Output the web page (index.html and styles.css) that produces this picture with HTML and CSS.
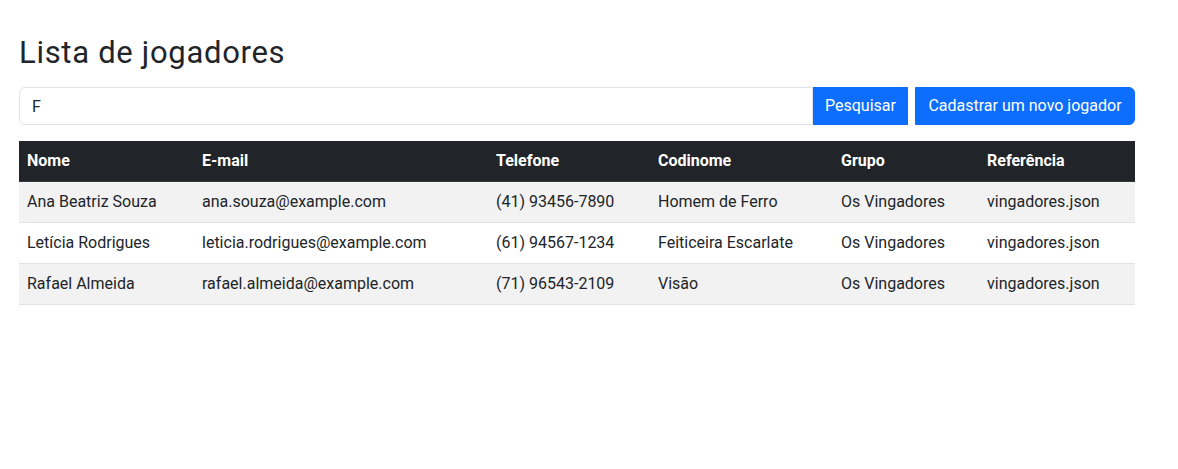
FILE: index.html
```html
<!DOCTYPE html>
<html lang="pt-BR">
<head>
<meta charset="utf-8">
<title>Lista de jogadores</title>
<link rel="stylesheet" href="styles.css">
</head>
<body>
<main class="page">
  <h1 class="title">Lista de jogadores</h1>
  <form class="search-group">
    <input class="search-input" type="text" value="F">
    <button class="btn btn-search" type="button">Pesquisar</button>
    <button class="btn btn-new" type="button">Cadastrar um novo jogador</button>
  </form>
  <table class="players">
    <colgroup>
      <col class="c-nome"><col class="c-email"><col class="c-tel"><col class="c-cod"><col class="c-grupo"><col class="c-ref">
    </colgroup>
    <thead>
      <tr><th>Nome</th><th>E-mail</th><th>Telefone</th><th>Codinome</th><th>Grupo</th><th>Referência</th></tr>
    </thead>
    <tbody>
      <tr><td>Ana Beatriz Souza</td><td>ana.souza@example.com</td><td>(41) 93456-7890</td><td>Homem de Ferro</td><td>Os Vingadores</td><td>vingadores.json</td></tr>
      <tr><td>Letícia Rodrigues</td><td>leticia.rodrigues@example.com</td><td>(61) 94567-1234</td><td>Feiticeira Escarlate</td><td>Os Vingadores</td><td>vingadores.json</td></tr>
      <tr><td>Rafael Almeida</td><td>rafael.almeida@example.com</td><td>(71) 96543-2109</td><td>Visão</td><td>Os Vingadores</td><td>vingadores.json</td></tr>
    </tbody>
  </table>
</main>
</body>
</html>
```
FILE: styles.css
```css
* { box-sizing: border-box; }
body {
  margin: 0;
  font-family: Roboto, "Liberation Sans", sans-serif;
  font-size: 16px;
  line-height: 24px;
  color: #212529;
  background: #fff;
}
.page {
  width: 1116px;
  margin-left: 19px;
  padding-top: 34px;
}
.title {
  margin: 0 0 15px;
  font-size: 31px;
  line-height: 38px;
  font-weight: 400;
  letter-spacing: 0.7px;
  color: #212529;
}
.search-group {
  display: flex;
  height: 38px;
  margin: 0 0 16px;
}
.search-input {
  flex: 1;
  min-width: 0;
  height: 38px;
  margin: 0;
  padding: 6px 12px;
  border: 1px solid #dee2e6;
  border-radius: 6px 0 0 6px;
  font: inherit;
  color: #212529;
  outline: none;
}
.btn {
  height: 38px;
  margin: 0;
  padding: 0;
  border: 1px solid #0d6efd;
  background: #0d6efd;
  color: #fff;
  font: inherit;
  text-align: center;
}
.btn-search {
  width: 95px;
  border-radius: 0;
}
.btn-new {
  width: 220px;
  margin-left: 7px;
  border-radius: 0 6px 6px 0;
}
.players {
  width: 1116px;
  border-collapse: collapse;
  table-layout: fixed;
}
.c-nome { width: 175px; }
.c-email { width: 294px; }
.c-tel { width: 162px; }
.c-cod { width: 183px; }
.c-grupo { width: 146px; }
.c-ref { width: 156px; }
.players th,
.players td {
  padding: 8px;
  text-align: left;
  white-space: nowrap;
  border-bottom: 1px solid #dee2e6;
}
.players th {
  background: #212529;
  color: #fff;
  font-weight: 700;
  border-bottom-color: #373b3e;
}
.players tbody tr:nth-child(odd) td {
  background: #f2f2f2;
}
```
